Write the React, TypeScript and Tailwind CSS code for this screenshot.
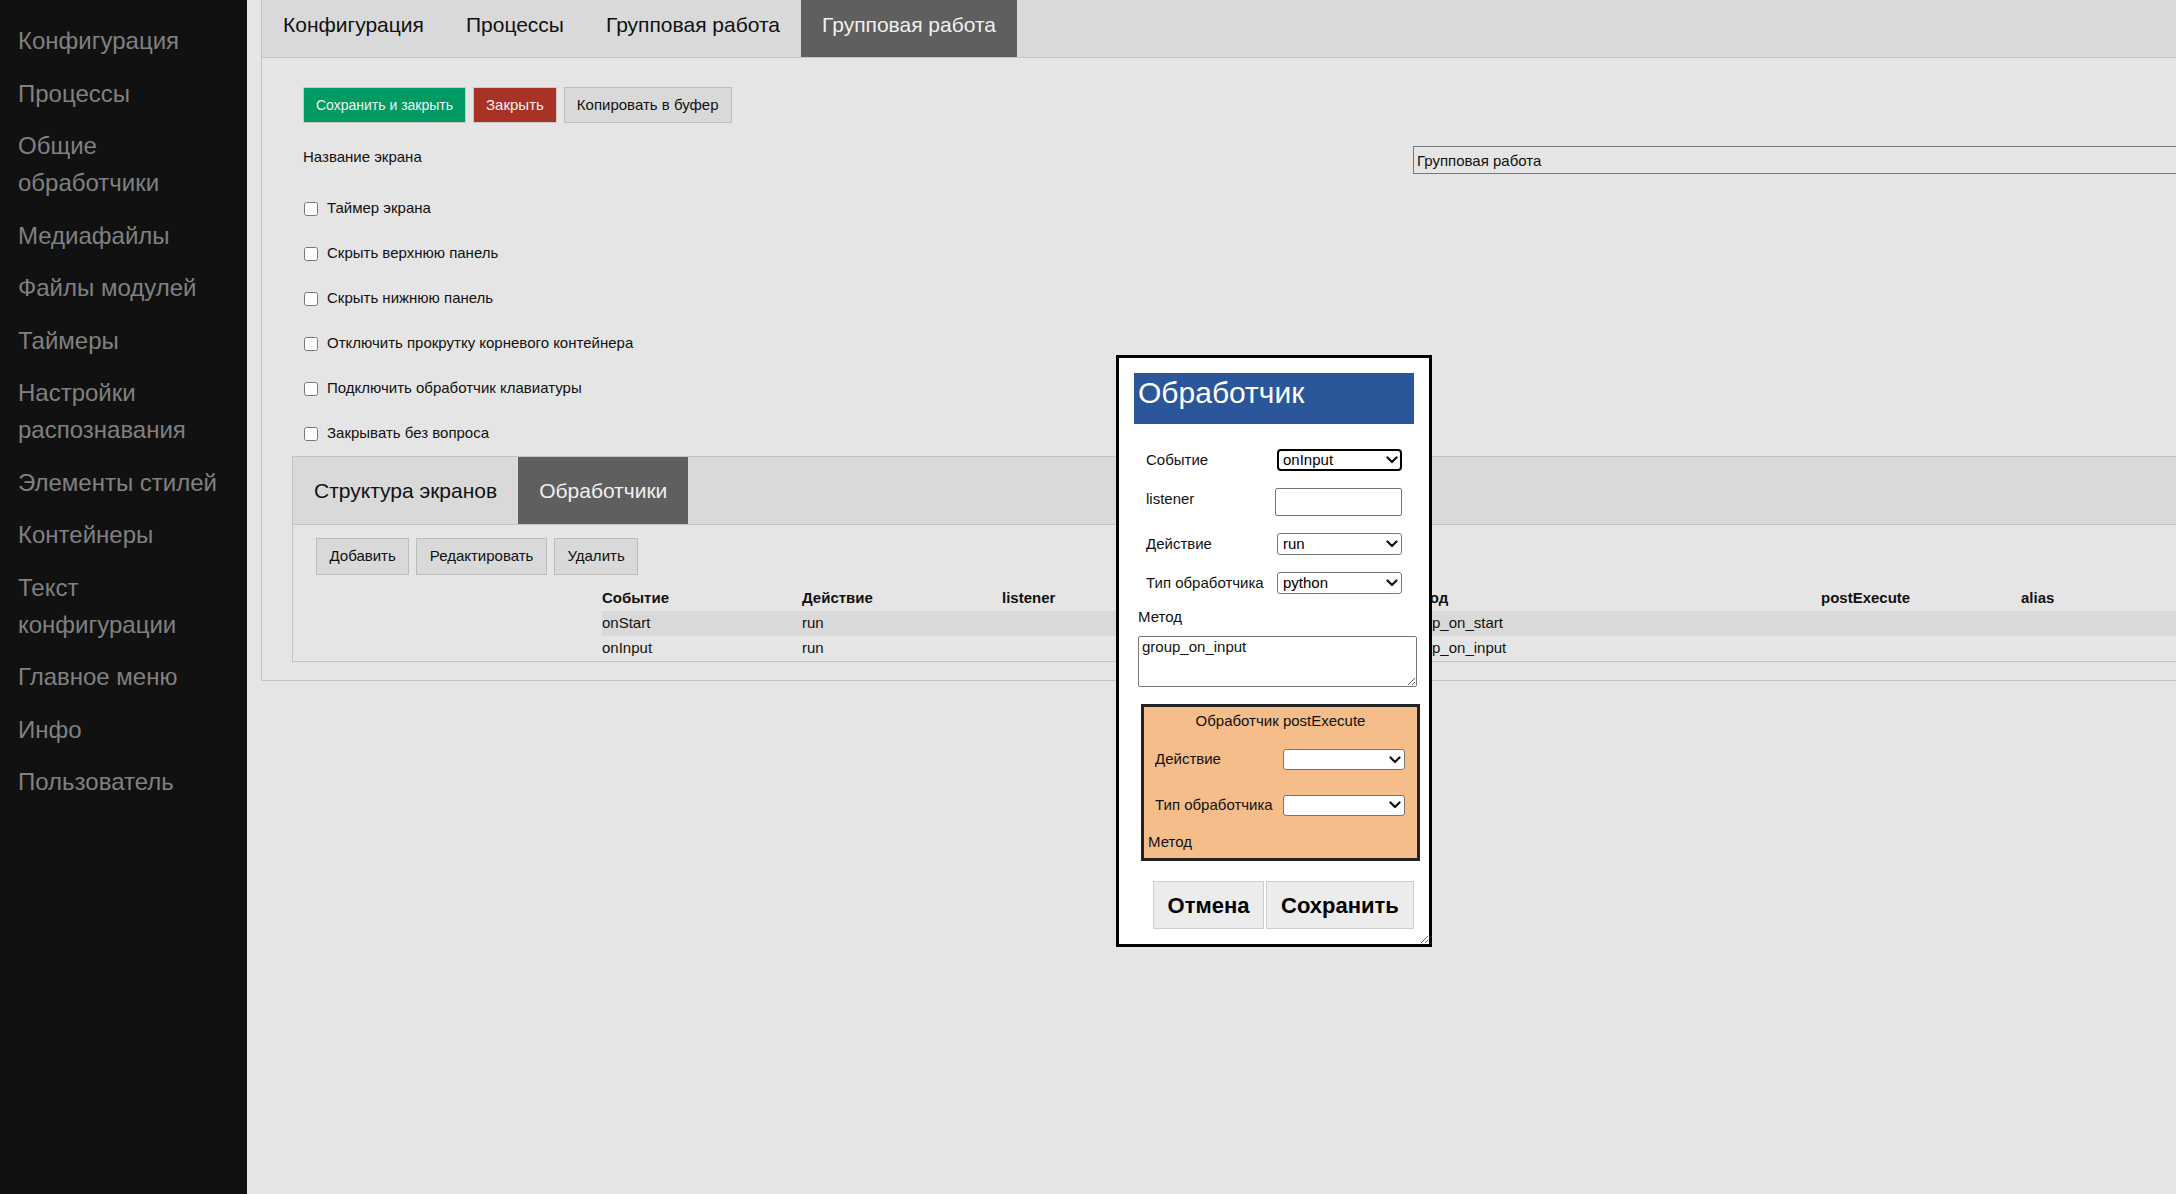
import React from "react";

const sideItems = [
  "Конфигурация",
  "Процессы",
  "Общие обработчики",
  "Медиафайлы",
  "Файлы модулей",
  "Таймеры",
  "Настройки распознавания",
  "Элементы стилей",
  "Контейнеры",
  "Текст конфигурации",
  "Главное меню",
  "Инфо",
  "Пользователь",
];

const checks = [
  "Таймер экрана",
  "Скрыть верхнюю панель",
  "Скрыть нижнюю панель",
  "Отключить прокрутку корневого контейнера",
  "Подключить обработчик клавиатуры",
  "Закрывать без вопроса",
];

const rows = [
  ["onStart", "run", "", "python", "group_on_start", "", ""],
  ["onInput", "run", "", "python", "group_on_input", "", ""],
];

function Chevron() {
  return (
    <svg
      width="12"
      height="8"
      viewBox="0 0 12 8"
      className="pointer-events-none absolute right-[4px] top-1/2 -translate-y-1/2"
    >
      <path
        d="M1.5 1.5 L6 6 L10.5 1.5"
        fill="none"
        stroke="#111"
        strokeWidth="2.2"
        strokeLinecap="round"
        strokeLinejoin="round"
      />
    </svg>
  );
}

function Select({ value, focused }: { value: string; focused?: boolean }) {
  return (
    <div className="relative h-[22px] w-[125px]">
      <select
        defaultValue={value}
        className={
          focused
            ? "h-full w-full appearance-none rounded-[4px] border-2 border-black bg-white pl-[4px] text-[15px] leading-[18px] text-black outline-none"
            : "h-full w-full appearance-none rounded-[3px] border border-[#767676] bg-white pl-[5px] text-[15px] leading-[18px] text-black outline-none"
        }
      >
        <option value={value}>{value}</option>
      </select>
      <Chevron />
    </div>
  );
}

function SmallSelect() {
  return (
    <div className="relative h-[21px] w-[122px]">
      <select className="h-full w-full appearance-none rounded-[3px] border border-[#767676] bg-white pl-[5px] text-[15px] outline-none">
        <option value=""></option>
      </select>
      <Chevron />
    </div>
  );
}

function Modal() {
  return (
    <div className="absolute left-[1116px] top-[355px] h-[592px] w-[316px] resize overflow-auto border-[3px] border-black bg-white text-[15px] text-[#111]">
      <div className="ml-[15px] mt-[15px] h-[51px] w-[280px] bg-[#2b5699] pl-[4px] pt-[3px] text-[30px] leading-[34px] text-white">
        Обработчик
      </div>

      <div className="ml-[27px] mt-[16px]">
        <div className="flex h-[40px] items-center">
          <div className="w-[131px]">Событие</div>
          <Select value="onInput" focused />
        </div>
        <div className="flex h-[44px] items-center">
          <div className="-mt-[6px] w-[131px]">listener</div>
          <input className="-ml-[2px] h-[28px] w-[127px] rounded-[2px] border border-[#767676] bg-white px-[3px] outline-none" />
        </div>
        <div className="flex h-[40px] items-center">
          <div className="w-[131px]">Действие</div>
          <Select value="run" />
        </div>
        <div className="flex h-[38px] items-center">
          <div className="w-[131px]">Тип обработчика</div>
          <Select value="python" />
        </div>
      </div>

      <div className="ml-[19px] mt-[5px] leading-[20px]">Метод</div>
      <textarea
        defaultValue="group_on_input"
        className="ml-[19px] mt-[9px] block h-[51px] w-[279px] rounded-[2px] border border-[#767676] bg-white px-[3px] py-[1px] text-[15px] leading-[18px] outline-none"
      />

      <div className="ml-[22px] mt-[17px] h-[157px] w-[279px] border-[3px] border-[#222] bg-[#f4bd8a] pt-[4px]">
        <div className="h-[20px] text-center leading-[20px]">Обработчик postExecute</div>
        <div className="ml-[11px] mt-[8px] flex h-[41px] items-center">
          <div className="w-[128px]">Действие</div>
          <SmallSelect />
        </div>
        <div className="ml-[11px] flex h-[50px] items-center">
          <div className="w-[128px]">Тип обработчика</div>
          <SmallSelect />
        </div>
        <div className="ml-[4px] flex h-[24px] items-center">Метод</div>
      </div>

      <div className="ml-[34px] mt-[20px] flex gap-[2px]">
        <button className="h-[48px] w-[111px] border border-[#cfcfcf] bg-[#ececec] text-[22px] font-bold text-black">
          Отмена
        </button>
        <button className="h-[48px] w-[148px] border border-[#cfcfcf] bg-[#ececec] text-[22px] font-bold text-black">
          Сохранить
        </button>
      </div>
    </div>
  );
}

export default function App() {
  return (
    <div className="relative flex h-[1194px] w-[2176px] overflow-hidden bg-[#e5e5e5] font-['Liberation_Sans',Arial,sans-serif] text-[15px] text-[#111]">
      <aside className="h-full w-[247px] shrink-0 bg-[#111111] pt-[14.5px]">
        {sideItems.map((item) => (
          <div
            key={item}
            className="py-[7.75px] pl-[18px] pr-[10px] text-[24px] leading-[37px] text-[#808080]"
          >
            {item}
          </div>
        ))}
      </aside>

      <main className="min-w-0 flex-1 pl-[14px]">
        <div className="border-b border-l border-[#c3c3c3]">
          <nav className="flex h-[58px] border-b border-[#c3c3c3] bg-[#d9d9d9] text-[21px]">
            <div className="px-[21px] pt-[13px] leading-[23px]">Конфигурация</div>
            <div className="px-[21px] pt-[13px] leading-[23px]">Процессы</div>
            <div className="px-[21px] pt-[13px] leading-[23px]">Групповая работа</div>
            <div className="h-[57px] bg-[#5f5f5f] px-[21px] pt-[13px] leading-[23px] text-[#f0f0f0]">
              Групповая работа
            </div>
          </nav>

          <div className="pb-[18px] pl-[30px] pt-[29px]">
            <div className="ml-[11px] flex gap-[7px]">
              <button className="h-[36px] border border-[#c9c9c9] bg-[#009a62] px-[12px] text-[14px] text-[#f2f2f2]">
                Сохранить и закрыть
              </button>
              <button className="h-[36px] border border-[#c9c9c9] bg-[#a93226] px-[12px] text-[15px] text-[#f2f2f2]">
                Закрыть
              </button>
              <button className="h-[36px] border border-[#bdbdbd] bg-[#d9d9d9] px-[12px] text-[15px] text-[#111]">
                Копировать в буфер
              </button>
            </div>

            <div className="ml-[11px] mt-[23px] flex items-start">
              <div className="w-[1110px] shrink-0 pt-[3px] leading-[16px]">Название экрана</div>
              <input
                defaultValue="Групповая работа"
                className="h-[28px] w-[800px] shrink-0 border border-[#767676] bg-transparent px-[3px] text-[15px] outline-none"
              />
            </div>

            <div className="ml-[11px] mt-[12px]">
              {checks.map((c) => (
                <label key={c} className="flex h-[45px] items-center">
                  <input type="checkbox" className="m-0 ml-[1px] mr-[9px] h-[14px] w-[14px]" />
                  <span>{c}</span>
                </label>
              ))}
            </div>

            <div className="-mr-[40px] border border-[#c3c3c3]">
              <div className="flex h-[68px] border-b border-[#c3c3c3] bg-[#d9d9d9] text-[21px]">
                <div className="px-[21px] leading-[67px]">Структура экранов</div>
                <div className="bg-[#5f5f5f] px-[21px] leading-[67px] text-[#f0f0f0]">Обработчики</div>
              </div>

              <div className="ml-[23px] mt-[13px] flex gap-[7px]">
                <button className="h-[37px] border border-[#bdbdbd] bg-[#d9d9d9] px-[12.5px] text-[15px]">
                  Добавить
                </button>
                <button className="h-[37px] border border-[#bdbdbd] bg-[#d9d9d9] px-[12.5px] text-[15px]">
                  Редактировать
                </button>
                <button className="h-[37px] border border-[#bdbdbd] bg-[#d9d9d9] px-[12.5px] text-[15px]">
                  Удалить
                </button>
              </div>

              <div className="ml-[309px] mt-[11px]">
                <div className="grid h-[25px] grid-cols-[200px_200px_200px_200px_419px_200px_1fr] items-center font-bold">
                  <div>Событие</div>
                  <div>Действие</div>
                  <div>listener</div>
                  <div>Тип обработчика</div>
                  <div>Метод</div>
                  <div>postExecute</div>
                  <div>alias</div>
                </div>
                {rows.map((r, i) => (
                  <div
                    key={i}
                    className={
                      i === 0
                        ? "grid h-[25px] grid-cols-[200px_200px_200px_200px_419px_200px_1fr] items-center bg-[#d9d9d9]"
                        : "grid h-[25px] grid-cols-[200px_200px_200px_200px_419px_200px_1fr] items-center"
                    }
                  >
                    {r.map((cell, j) => (
                      <div key={j}>{cell}</div>
                    ))}
                  </div>
                ))}
              </div>
            </div>
          </div>
        </div>
      </main>

      <Modal />
    </div>
  );
}
